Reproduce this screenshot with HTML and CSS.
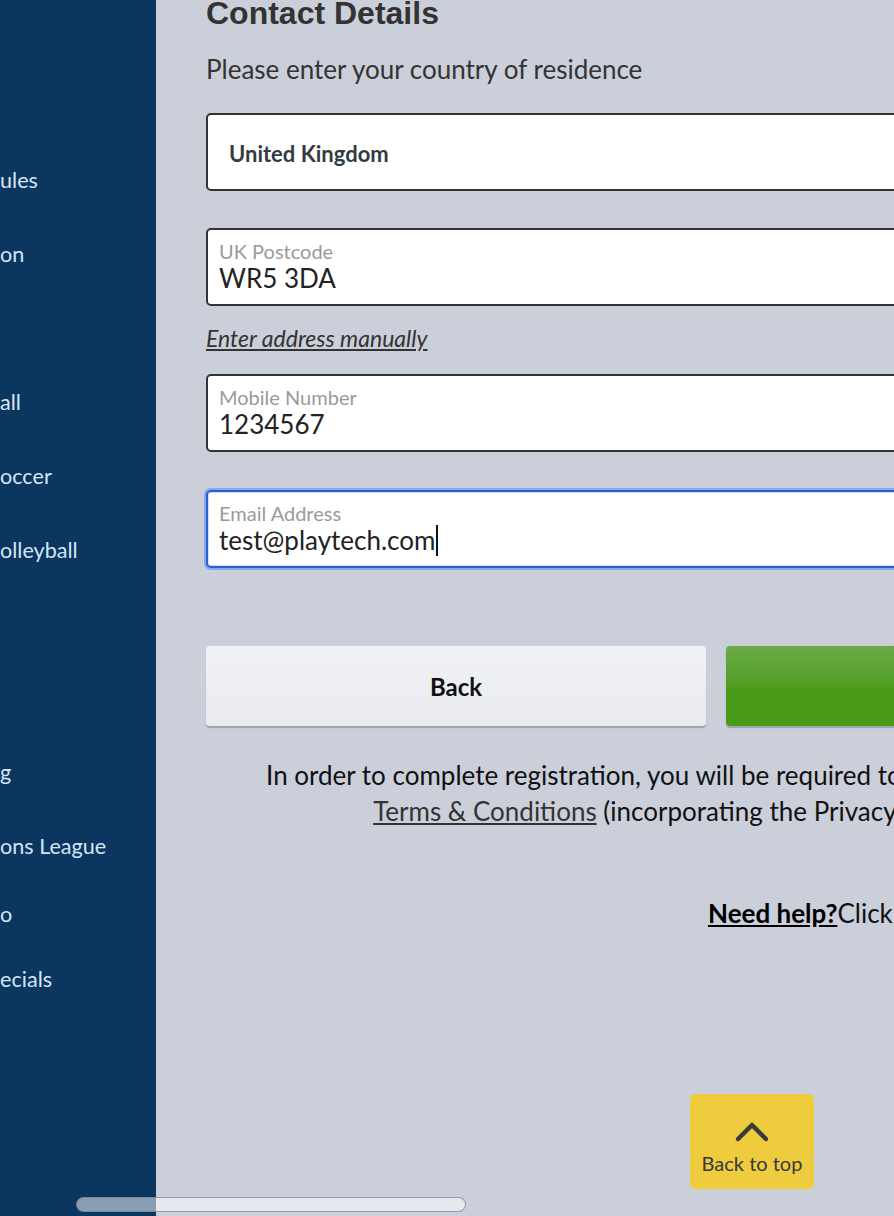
FILE: index.html
```html
<!DOCTYPE html>
<html>
<head>
<meta charset="utf-8">
<link rel="stylesheet" href="styles.css">
</head>
<body>
<div class="page">
  <nav class="sidebar">
    <ul class="nav">
      <li>ules</li>
      <li>on</li>
      <li class="empty"></li>
      <li>all</li>
      <li>occer</li>
      <li>olleyball</li>
      <li class="empty"></li>
      <li class="empty"></li>
      <li>g</li>
      <li>ons League</li>
      <li class="short">o</li>
      <li class="short">ecials</li>
    </ul>
  </nav>
  <main class="main">
    <div class="form">
      <h1 class="title">Contact Details</h1>
      <p class="intro">Please enter your country of residence</p>
      <div class="field select"><span class="select-value">United Kingdom</span></div>
      <div class="field">
        <span class="label">UK Postcode</span>
        <span class="value">WR5 3DA</span>
      </div>
      <a class="manual">Enter address manually</a>
      <div class="field">
        <span class="label">Mobile Number</span>
        <span class="value">1234567</span>
      </div>
      <div class="field focus">
        <span class="label">Email Address</span>
        <span class="value">test@playtech.com<span class="caret"></span></span>
      </div>
      <div class="buttons">
        <button class="btn back">Back</button>
        <button class="btn next">Continue</button>
      </div>
      <p class="terms">In order to complete registration, you will be required to read and accept our<br><a class="tc">Terms &amp; Conditions</a> (incorporating the Privacy Statement)</p>
      <p class="help"><a class="help-link">Need help?</a>Click here to contact our support team</p>
    </div>
  </main>
</div>
<a class="totop">
  <svg width="36" height="24" viewBox="0 0 36 24"><path d="M4 20 L18 6 L32 20" fill="none" stroke="#3a3a3c" stroke-width="4.5" stroke-linecap="round" stroke-linejoin="round"/></svg>
  <span>Back to top</span>
</a>
<div class="hscroll"></div>
</body>
</html>
```

FILE: styles.css
```css
html, body {
  margin: 0;
  padding: 0;
  height: 1216px;
  overflow: hidden;
  background: #cacfda;
}
.page {
  display: flex;
  height: 1216px;
  font-family: Lato, "Open Sans", sans-serif;
}
.sidebar {
  width: 156px;
  flex: none;
  background: #0a3660;
  overflow: hidden;
}
.nav {
  list-style: none;
  margin: 0;
  padding: 143px 0 0 0;
}
.nav li {
  height: 74px;
  line-height: 74px;
  font-size: 21.6px;
  color: #d6e5f4;
  white-space: nowrap;
}
.nav li.short {
  height: 68px;
  line-height: 68px;
  margin-top: -3px;
}
.main {
  flex: 1;
  overflow: hidden;
  padding-left: 50px;
}
.form {
  width: 1020px;
}
.title {
  font-family: "Liberation Sans", Arial, sans-serif;
  font-weight: bold;
  font-size: 32px;
  line-height: 36px;
  color: #333333;
  margin: -5px 0 0 0;
}
.intro {
  font-size: 26px;
  line-height: 32px;
  color: #333333;
  margin: 22px 0 0 0;
}
.field {
  box-sizing: border-box;
  height: 78px;
  background: #ffffff;
  border: 2px solid #333333;
  border-radius: 5px;
  padding: 9px 11px 0 11px;
  display: flex;
  flex-direction: column;
  margin-top: 37px;
}
.field.select {
  margin-top: 28px;
  justify-content: center;
  padding: 3px 21px 0 21px;
}
.select-value {
  font-weight: bold;
  font-size: 22px;
  color: #333a40;
}
.label {
  font-size: 20px;
  line-height: 24px;
  color: #9a9a9a;
}
.value {
  font-size: 26px;
  line-height: 30px;
  color: #222222;
}
.caret {
  display: inline-block;
  width: 2px;
  height: 31px;
  background: #111111;
  vertical-align: -6px;
  margin-left: 1px;
}
.manual {
  display: block;
  font-style: italic;
  text-decoration: underline;
  font-size: 23px;
  line-height: 28px;
  color: #333333;
  margin-top: 18px;
}
.manual + .field {
  margin-top: 22px;
}
.field.focus {
  border: 2px solid #2460d0;
  box-shadow: 0 0 0 2px #86a8ea, inset 0 0 0 1px #cfe0ff;
  margin-top: 38px;
}
.buttons {
  display: flex;
  gap: 20px;
  margin-top: 78px;
}
.btn {
  width: 500px;
  height: 80px;
  border: none;
  border-radius: 4px;
  font-family: Lato, sans-serif;
  font-weight: bold;
  font-size: 24px;
  color: #111111;
  padding: 0;
}
.back {
  background: linear-gradient(#f0f1f4, #eaebf0);
  box-shadow: 0 2px 1px #9ea2ac;
}
.next {
  background: linear-gradient(#6aaa46 0%, #5aa232 35%, #4b9b1a 55%, #4b9b1a 100%);
  color: #ffffff;
  box-shadow: 0 2px 1px #9ea2ac;
}
.terms {
  width: 988px;
  text-align: center;
  white-space: nowrap;
  font-size: 26px;
  line-height: 36px;
  color: #111111;
  margin: 31px 0 0 0;
}
.tc {
  color: #333333;
  text-decoration: underline;
}
.help {
  font-size: 26px;
  line-height: 32px;
  color: #111111;
  margin: 68px 0 0 502px;
  white-space: nowrap;
}
.help-link {
  font-weight: bold;
  text-decoration: underline;
  color: #000000;
}
.totop {
  position: fixed;
  left: 690px;
  top: 1094px;
  width: 124px;
  height: 95px;
  background: #efcc3e;
  border-radius: 5px;
  display: flex;
  flex-direction: column;
  align-items: center;
  font-family: Lato, sans-serif;
  font-size: 20px;
  color: #38383a;
}
.totop svg {
  margin-top: 25px;
}
.totop span {
  margin-top: 8px;
}
.hscroll {
  position: fixed;
  left: 76px;
  top: 1197px;
  width: 388px;
  height: 13px;
  border: 1px solid rgba(120, 124, 140, 0.7);
  border-radius: 8px;
  background: rgba(255, 255, 255, 0.52);
}
```
